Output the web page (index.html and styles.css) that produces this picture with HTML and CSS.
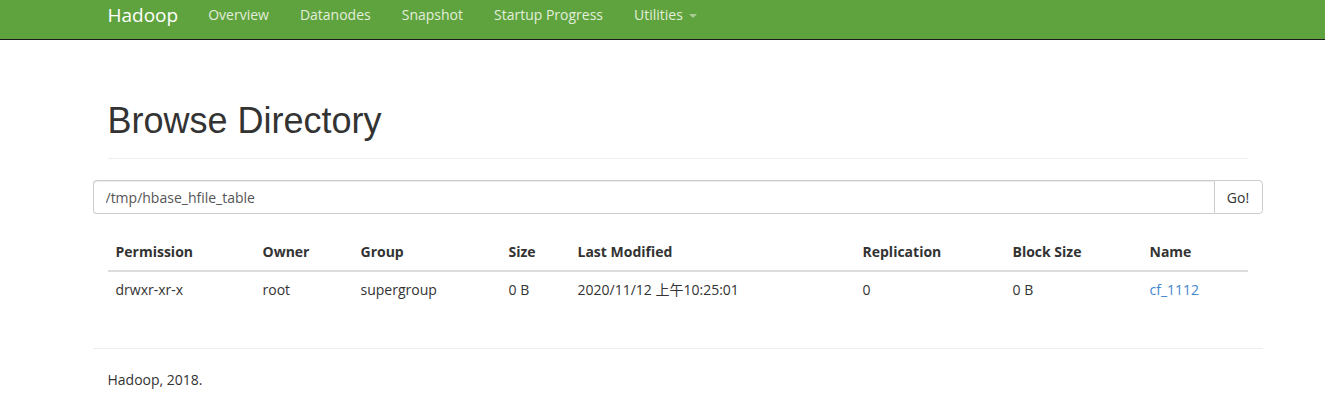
FILE: index.html
```html
<!DOCTYPE html>
<html lang="en">
<head>
    <meta charset="UTF-8">
    <title>Browsing HDFS</title>
    <link rel="stylesheet" href="styles.css">
</head>
<body>
    <nav class="navbar">
        <div class="navbar-inner">
            <a class="brand" href="#">Hadoop</a>
            <ul class="nav">
                <li><a href="#">Overview</a></li>
                <li><a href="#">Datanodes</a></li>
                <li><a href="#">Snapshot</a></li>
                <li><a href="#">Startup Progress</a></li>
                <li><a href="#">Utilities <span class="caret"></span></a></li>
            </ul>
        </div>
    </nav>

    <div class="container">
        <div class="page-header">
            <h1>Browse Directory</h1>
        </div>

        <form class="input-group" onsubmit="return false;">
            <input class="form-control" type="text" value="/tmp/hbase_hfile_table">
            <button class="btn" type="submit">Go!</button>
        </form>

        <div class="table-wrap">
            <table class="table">
                <thead>
                    <tr>
                        <th class="c-perm">Permission</th>
                        <th class="c-owner">Owner</th>
                        <th class="c-group">Group</th>
                        <th class="c-size">Size</th>
                        <th class="c-mod">Last Modified</th>
                        <th class="c-repl">Replication</th>
                        <th class="c-block">Block Size</th>
                        <th class="c-name">Name</th>
                    </tr>
                </thead>
                <tbody>
                    <tr>
                        <td>drwxr-xr-x</td>
                        <td>root</td>
                        <td>supergroup</td>
                        <td>0 B</td>
                        <td>2020/11/12 上午10:25:01</td>
                        <td>0</td>
                        <td>0 B</td>
                        <td><a href="#">cf_1112</a></td>
                    </tr>
                </tbody>
            </table>
        </div>

        <hr class="footer-line">
        <div class="footer">Hadoop, 2018.</div>
    </div>
</body>
</html>
```

FILE: styles.css
```css
html, body {
    margin: 0;
    padding: 0;
}
body {
    font-family: "Open Sans", "Noto Sans CJK SC", sans-serif;
    font-size: 14px;
    line-height: 20px;
    color: #333;
    background: #fff;
}
a {
    color: #4387cc;
    text-decoration: none;
}

/* navbar */
.navbar {
    background-color: #5fa33e;
    border-bottom: 1px solid #1a1a1a;
    height: 39px;
}
.navbar-inner {
    width: 1170px;
    margin-left: calc(50% - 570px);
    display: flex;
    align-items: center;
    height: 30px;
}
.brand {
    color: #fff;
    font-size: 19px;
    padding: 0 15px;
}
.nav {
    list-style: none;
    margin: 0;
    padding: 0;
    display: flex;
}
.nav a {
    display: block;
    padding: 0 15px;
    color: #e2eedb;
}
.nav li + li {
    margin-left: 1px;
}
.caret {
    display: inline-block;
    width: 0;
    height: 0;
    margin-left: 2px;
    vertical-align: middle;
    border-top: 4px solid #a9cc98;
    border-left: 4px solid transparent;
    border-right: 4px solid transparent;
}

/* main */
.container {
    width: 1170px;
    margin-left: calc(50% - 570px);
}
.page-header {
    margin: 61px 15px 21px;
    padding-bottom: 17px;
    border-bottom: 1px solid #eee;
}
.page-header h1 {
    margin: 0;
    font-family: "Liberation Sans", Arial, sans-serif;
    font-weight: normal;
    font-size: 36px;
    line-height: 40px;
    color: #333;
}
.input-group {
    display: flex;
    margin: 0;
}
.form-control {
    flex: 1;
    height: 34px;
    box-sizing: border-box;
    padding: 6px 12px;
    font-family: inherit;
    font-size: 14px;
    color: #555;
    border: 1px solid #ccc;
    border-right: none;
    border-radius: 4px 0 0 4px;
    box-shadow: inset 0 1px 1px rgba(0, 0, 0, 0.075);
    outline: none;
}
.btn {
    width: 49px;
    height: 34px;
    font-family: inherit;
    font-size: 14px;
    color: #333;
    background: #fff;
    border: 1px solid #ccc;
    border-radius: 0 4px 4px 0;
    cursor: pointer;
}

/* table */
.table-wrap {
    padding: 20px 15px 0;
}
.table {
    width: 1140px;
    border-collapse: collapse;
    table-layout: fixed;
    margin-bottom: 40px;
}
.table th,
.table td {
    padding: 8px;
    text-align: left;
    line-height: 20px;
}
.table th {
    font-weight: bold;
    border-bottom: 2px solid #ddd;
}
.c-perm { width: 131px; }
.c-owner { width: 82px; }
.c-group { width: 132px; }
.c-size { width: 53px; }
.c-mod { width: 269px; }
.c-repl { width: 134px; }
.c-block { width: 121px; }
.c-name { width: 90px; }

/* footer */
.footer-line {
    margin: 20px 0 0;
    border: 0;
    border-top: 1px solid #eee;
}
.footer {
    padding: 21px 15px;
}
```
